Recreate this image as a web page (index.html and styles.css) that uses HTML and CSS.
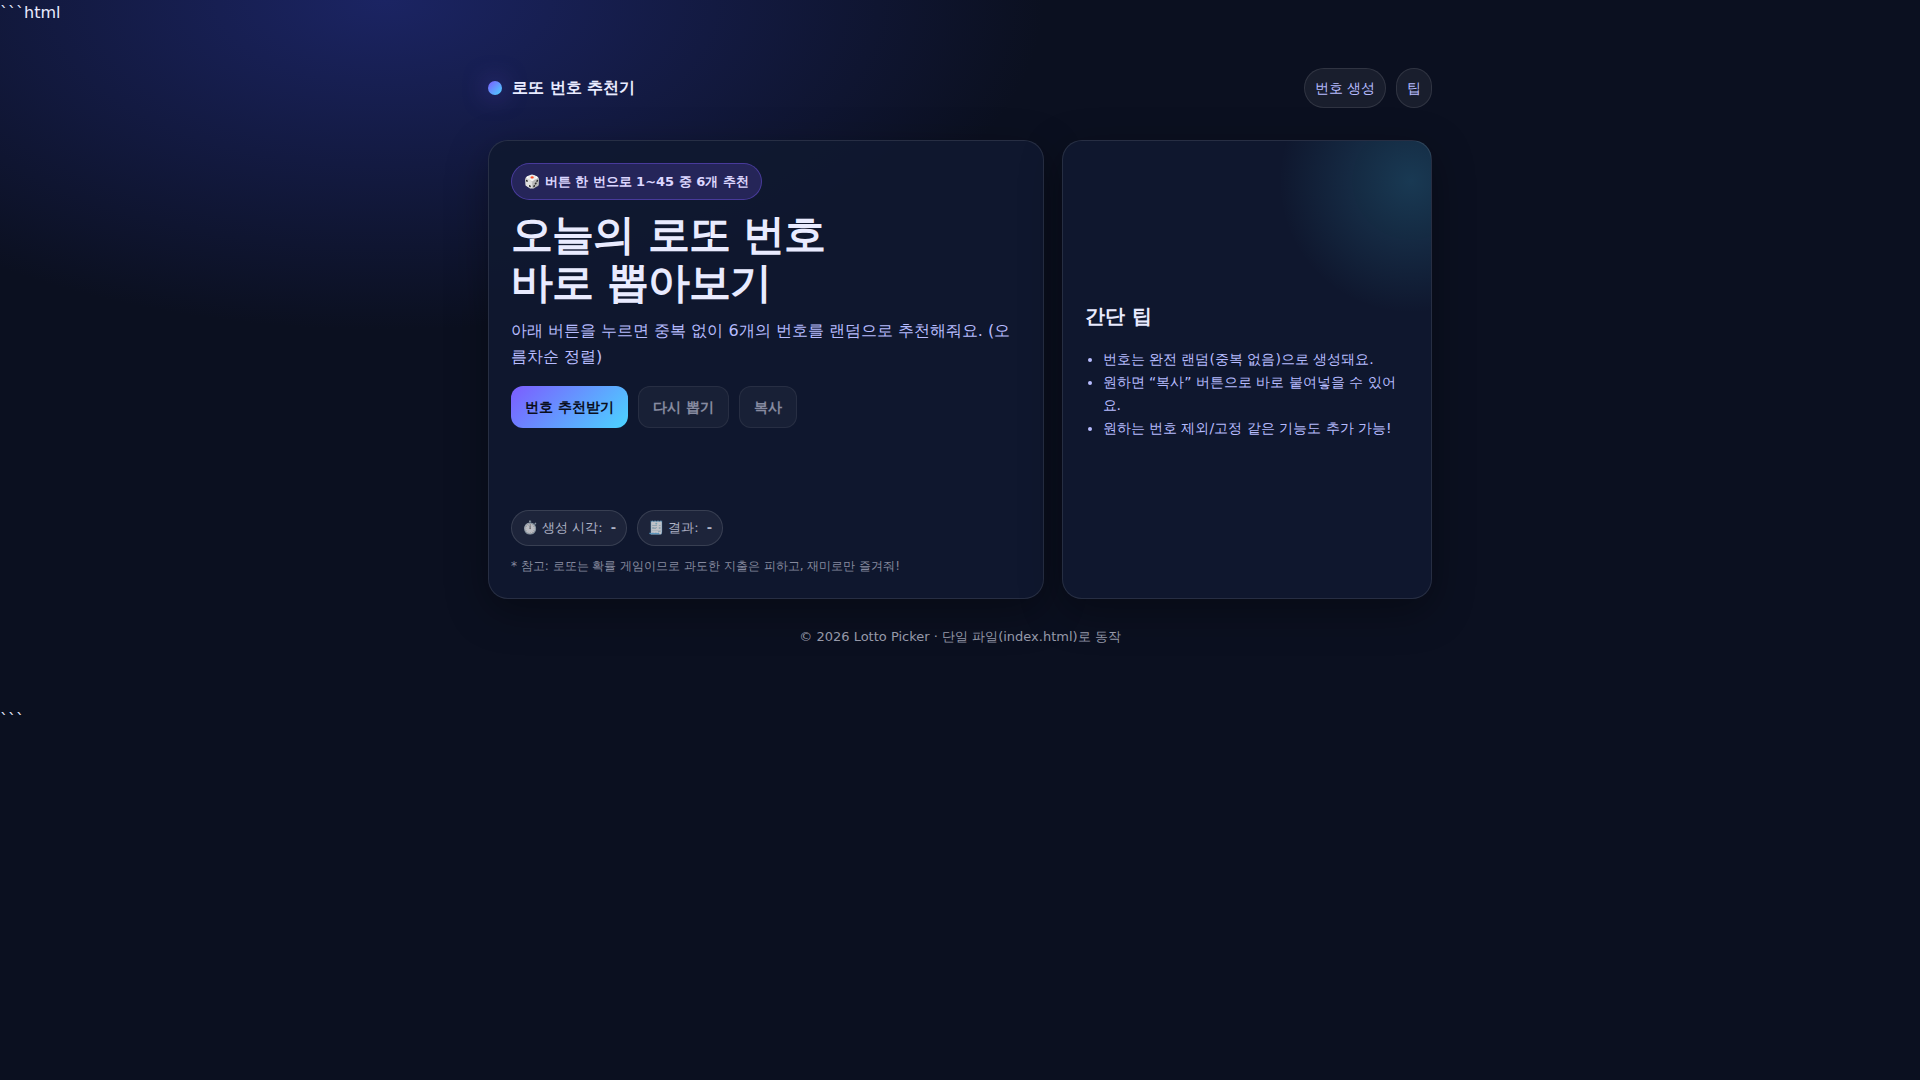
FILE: index.html
```html
<!DOCTYPE html>
<html lang="ko">
<head>
<meta charset="utf-8">
<meta name="viewport" content="width=device-width, initial-scale=1">
<title>로또 번호 추천기</title>
<link rel="stylesheet" href="styles.css">
</head>
<body>
&#96;&#96;&#96;html
<div class="wrap">
  <header class="topbar">
    <div class="brand"><span class="dot"></span>로또 번호 추천기</div>
    <nav class="nav">
      <a href="#picker">번호 생성</a>
      <a href="#tips">팁</a>
    </nav>
  </header>
  <main class="grid">
    <section class="card" id="picker">
      <div class="badge">🎲 버튼 한 번으로 1~45 중 6개 추천</div>
      <h1 class="title">오늘의 로또 번호<br>바로 뽑아보기</h1>
      <p class="lead">아래 버튼을 누르면 중복 없이 6개의 번호를 랜덤으로 추천해줘요. (오름차순 정렬)</p>
      <div class="actions">
        <button class="btn primary" type="button">번호 추천받기</button>
        <button class="btn" type="button" disabled>다시 뽑기</button>
        <button class="btn" type="button" disabled>복사</button>
      </div>
      <div class="balls" aria-live="polite"></div>
      <div class="meta">
        <span class="chip">⏱️ 생성 시각: <strong>-</strong></span>
        <span class="chip">🧾 결과: <strong>-</strong></span>
      </div>
      <p class="note">* 참고: 로또는 확률 게임이므로 과도한 지출은 피하고, 재미로만 즐겨줘!</p>
    </section>
    <aside class="card tips" id="tips">
      <h2 class="subtitle">간단 팁</h2>
      <ul class="list">
        <li>번호는 완전 랜덤(중복 없음)으로 생성돼요.</li>
        <li>원하면 “복사” 버튼으로 바로 붙여넣을 수 있어요.</li>
        <li>원하는 번호 제외/고정 같은 기능도 추가 가능!</li>
      </ul>
    </aside>
  </main>
  <footer class="footer">© 2026 Lotto Picker · 단일 파일(index.html)로 동작</footer>
</div>
&#96;&#96;&#96;
</body>
</html>
```
FILE: styles.css
```css
* { box-sizing: border-box; }

body {
  margin: 0;
  min-height: 100vh;
  font-family: "DejaVu Sans", system-ui, sans-serif;
  font-size: 16px;
  line-height: 26px;
  color: #e9ebff;
  background: radial-gradient(1200px 600px at 20% 0, #1b2463 0%, transparent 55%) no-repeat #0b1020;
}

.wrap {
  max-width: 1000px;
  margin: 0 auto;
  padding: 42px 28px 58px;
}

.topbar {
  display: flex;
  align-items: center;
  justify-content: space-between;
  margin-bottom: 32px;
}

.brand {
  display: flex;
  align-items: center;
  gap: 10px;
  font-weight: 700;
}

.dot {
  width: 14px;
  height: 14px;
  border-radius: 50%;
  background: linear-gradient(135deg, #7c5cff, #4bd4ff);
  box-shadow: 0 0 24px rgba(124, 92, 255, .5);
}

.nav { display: flex; gap: 10px; }

.nav a {
  padding: 8px 10px;
  border: 1px solid rgba(255, 255, 255, .1);
  border-radius: 999px;
  background: rgba(255, 255, 255, .06);
  color: #b7bcff;
  font-size: 14px;
  line-height: 22px;
  text-decoration: none;
}

.grid {
  display: grid;
  grid-template-columns: 3fr 2fr;
  gap: 18px;
}

.card {
  padding: 22px;
  border: 1px solid rgba(255, 255, 255, .1);
  border-radius: 20px;
  background: rgba(16, 24, 48, .9);
  box-shadow: 0 12px 40px rgba(0, 0, 0, .35);
}

.badge {
  width: fit-content;
  padding: 7px 12px;
  border: 1px solid rgba(124, 92, 255, .4);
  border-radius: 999px;
  background: rgba(124, 92, 255, .2);
  color: #dcd6ff;
  font-size: 13px;
  font-weight: 700;
  line-height: 21px;
}

.title {
  margin: 11px 0;
  font-size: 42px;
  line-height: 48px;
  letter-spacing: -1px;
}

.lead {
  margin: 0 0 16px;
  color: #b7bcff;
  line-height: 26px;
}

.actions, .meta { display: flex; flex-wrap: wrap; gap: 10px; }

.btn {
  padding: 10px 14px;
  border: 1px solid rgba(255, 255, 255, .12);
  border-radius: 12px;
  background: rgba(255, 255, 255, .08);
  color: #e9ebff;
  font: inherit;
  font-size: 14px;
  font-weight: 700;
  line-height: 20px;
}

.btn:disabled { opacity: .55; }

.btn.primary {
  border: 0;
  padding: 11px 14px;
  background: linear-gradient(135deg, #7c5cff, #4bd4ff);
  color: #0a0f1e;
}

.balls { min-height: 54px; margin: 14px 0; }

.chip {
  padding: 7px 10px;
  border: 1px solid rgba(255, 255, 255, .12);
  border-radius: 999px;
  background: rgba(255, 255, 255, .06);
  color: rgba(233, 235, 255, .72);
  font-size: 13px;
  line-height: 20px;
}

.chip strong { margin-left: 4px; }

.note {
  margin: 10px 0 0;
  color: #868a9f;
  font-size: 12px;
  line-height: 20px;
}

.tips {
  display: flex;
  flex-direction: column;
  justify-content: center;
  background:
    radial-gradient(circle 132px at calc(100% - 20px) 40px, rgba(75, 212, 255, .18), transparent) no-repeat,
    rgba(16, 24, 48, .9);
}

.subtitle {
  margin: 0 0 16px;
  font-size: 20px;
  line-height: 32px;
}

.list {
  margin: 0;
  padding-left: 18px;
  color: #b7bcff;
  font-size: 14px;
  line-height: 23px;
}

.footer {
  margin-top: 26px;
  color: #9699a9;
  font-size: 13px;
  line-height: 24px;
  text-align: center;
}
```
